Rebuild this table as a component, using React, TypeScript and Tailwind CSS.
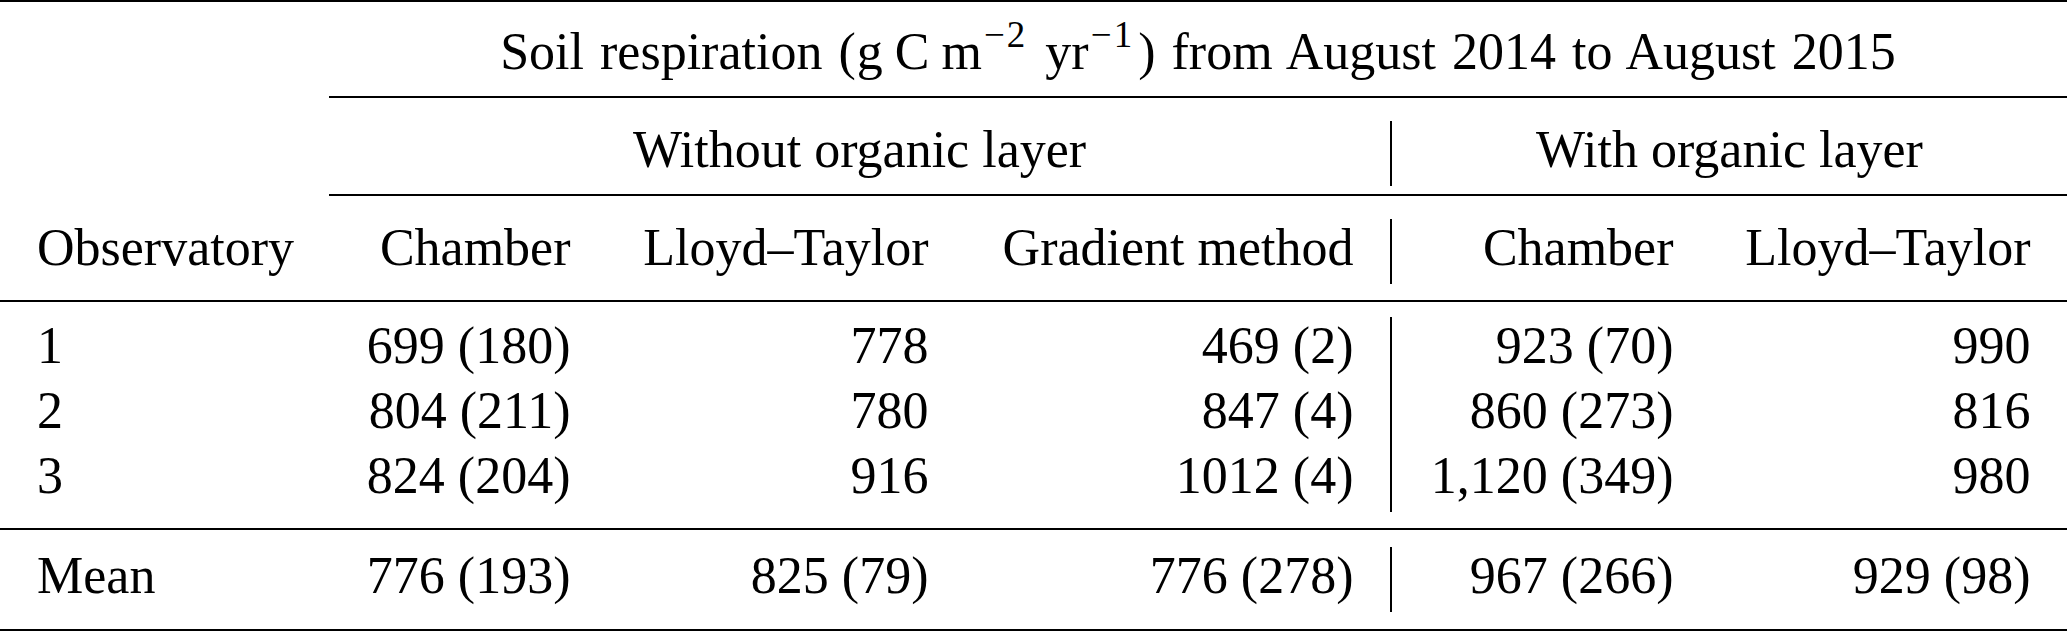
import React from "react";

const COLS = "grid grid-cols-[329px_278px_358px_425px_320px_357px]";

const rows: string[][] = [
  ["1", "699 (180)", "778", "469 (2)", "923 (70)", "990"],
  ["2", "804 (211)", "780", "847 (4)", "860 (273)", "816"],
  ["3", "824 (204)", "916", "1012 (4)", "1,120 (349)", "980"],
];

const mean = ["Mean", "776 (193)", "825 (79)", "776 (278)", "967 (266)", "929 (98)"];

function Row({ cells }: { cells: string[] }) {
  return (
    <div className={`${COLS} h-[65px] leading-[57px]`}>
      <div className="pl-[37px] text-left whitespace-nowrap">{cells[0]}</div>
      <div className="pr-[36.5px] text-right whitespace-nowrap">{cells[1]}</div>
      <div className="pr-[36.5px] text-right whitespace-nowrap">{cells[2]}</div>
      <div className="pr-[36.5px] text-right whitespace-nowrap">{cells[3]}</div>
      <div className="border-l-2 border-black pr-[36.5px] text-right whitespace-nowrap">{cells[4]}</div>
      <div className="pr-[36.5px] text-right whitespace-nowrap">{cells[5]}</div>
    </div>
  );
}

function Sup({ n }: { n: string }) {
  return (
    <span className="relative -top-[22px] text-[37px]">
      <span className="inline-block w-[25px] text-center">{"\u2212"}</span>
      {n}
    </span>
  );
}

export default function App() {
  return (
    <div className="w-[2067px] h-[631px] bg-white text-black font-['Liberation_Serif','Times_New_Roman',serif] text-[52px] flex flex-col">
      <div className="h-[2px] bg-black" />

      <div className={`${COLS} mt-[21px] h-[65px] leading-[57px]`}>
        <div className="col-start-2 col-span-5 text-center whitespace-nowrap [word-spacing:3px]">
          Soil respiration (<span className="ml-[1px]">g</span>
          <span className="ml-[12px]">C</span>
          <span className="ml-[12px]">m</span>
          <Sup n="2" />
          <span className="ml-[20px]">yr</span>
          <Sup n="1" />
          <span className="ml-[6px]">)</span> from August 2014 to August 2015
        </div>
      </div>

      <div className="mt-[8px] ml-[329px] h-[2px] bg-black" />

      <div className={`${COLS} mt-[23px] h-[65px] leading-[57px]`}>
        <div className="col-start-2 col-span-3 text-center whitespace-nowrap">Without organic layer</div>
        <div className="col-span-2 border-l-2 border-black text-center whitespace-nowrap">With organic layer</div>
      </div>

      <div className="mt-[8px] ml-[329px] h-[2px] bg-black" />

      <div className="mt-[23px]">
        <Row cells={["Observatory", "Chamber", "Lloyd\u2013Taylor", "Gradient method", "Chamber", "Lloyd\u2013Taylor"]} />
      </div>

      <div className="mt-[16px] h-[2px] bg-black" />

      <div className="mt-[15px] flex flex-col">
        {rows.map((r) => (
          <Row key={r[0]} cells={r} />
        ))}
      </div>

      <div className="mt-[16px] h-[2px] bg-black" />

      <div className="mt-[17px]">
        <Row cells={mean} />
      </div>

      <div className="mt-[17px] h-[2px] bg-black" />
    </div>
  );
}
